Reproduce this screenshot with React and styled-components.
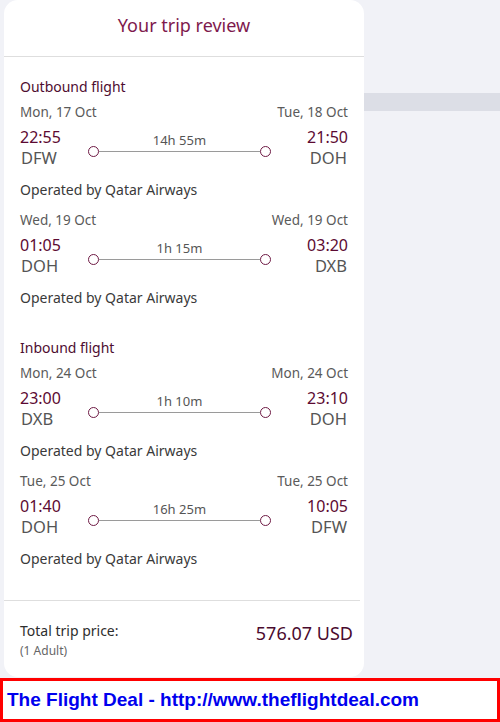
import styled, { createGlobalStyle } from 'styled-components';

const GlobalStyle = createGlobalStyle`
  html, body {
    margin: 0;
    padding: 0;
    background: #f1f2f7;
  }
  * { box-sizing: border-box; }
`;

const Page = styled.div`
  width: 500px;
  font-family: 'Noto Sans', 'Open Sans', sans-serif;
`;

const Top = styled.div`
  display: flex;
  align-items: flex-start;
`;

const Card = styled.div`
  width: 360px;
  margin-left: 4px;
  background: #fff;
  border-radius: 14px;
  flex-shrink: 0;
  position: relative;
  z-index: 1;
`;

const Side = styled.div`
  flex: 1;
  padding-top: 93px;
  margin-left: -1px;
`;

const Band = styled.div`
  height: 18px;
  background: #dcdee6;
`;

const Header = styled.div`
  height: 57px;
  display: flex;
  align-items: center;
  justify-content: center;
  padding-bottom: 7px;
  border-bottom: 1px solid #dedede;
  font-size: 18px;
  color: #7e1a4d;
`;

const Body = styled.div`
  padding: 20px 16px 31px 16px;
`;

const SectionTitle = styled.div`
  font-size: 14px;
  line-height: 20px;
  color: #4e0d30;
  margin-top: ${p => p.$gap || 0}px;
`;

const Segment = styled.div`
  margin-top: ${p => p.$first ? 6 : 11}px;
`;

const DateRow = styled.div`
  display: flex;
  justify-content: space-between;
  font-size: 13.5px;
  line-height: 18px;
  color: #5a5a5a;
`;

const Legs = styled.div`
  display: flex;
  align-items: flex-start;
  margin-top: 6px;
`;

const Point = styled.div`
  display: flex;
  flex-direction: column;
  align-items: ${p => p.$end ? 'flex-end' : 'flex-start'};
  margin-left: ${p => p.$end ? 'auto' : '0'};
`;

const Time = styled.div`
  font-size: 16px;
  line-height: 21px;
  color: #5c0a32;
`;

const Code = styled.div`
  font-size: 16.5px;
  line-height: 20px;
  color: #555;
  padding: 0 1px;
`;

const Middle = styled.div`
  width: 183px;
  margin-left: 27px;
  margin-top: 5px;
  display: flex;
  flex-direction: column;
  align-items: center;
`;

const Duration = styled.div`
  font-size: 13px;
  line-height: 16px;
  color: #555;
`;

const Track = styled.div`
  width: 100%;
  height: 10px;
  margin-top: -2px;
  display: flex;
  align-items: center;
`;

const Dot = styled.span`
  width: 11px;
  height: 11px;
  border: 1.5px solid #6e1a44;
  border-radius: 50%;
  flex-shrink: 0;
`;

const Line = styled.span`
  flex: 1;
  height: 1px;
  background: #9a9a9a;
`;

const Operator = styled.div`
  margin-top: 12px;
  font-size: 14px;
  line-height: 20px;
  color: #3a3a3a;
`;

const Total = styled.div`
  border-top: 1px solid #dedede;
  margin-right: 4px;
  padding: 20px 7px 18px 16px;
  display: flex;
  justify-content: space-between;
  align-items: flex-start;
`;

const TotalLabel = styled.div`
  font-size: 14px;
  line-height: 20px;
  color: #2e2e2e;
`;

const Pax = styled.div`
  margin-top: 2px;
  font-size: 12px;
  line-height: 16px;
  color: #666;
`;

const Price = styled.div`
  font-size: 18px;
  line-height: 24px;
  color: #4a0a2e;
`;

const Footer = styled.div`
  margin-top: 1px;
  height: 44px;
  border: 3px solid #ff0000;
  background: #fff;
  display: flex;
  align-items: center;
  padding-left: 4px;
  font-family: 'Liberation Sans', Arial, sans-serif;
  font-weight: bold;
  font-size: 19px;
  color: #0000ee;
`;

const outbound = [
  { d1: 'Mon, 17 Oct', d2: 'Tue, 18 Oct', t1: '22:55', t2: '21:50', c1: 'DFW', c2: 'DOH', dur: '14h 55m' },
  { d1: 'Wed, 19 Oct', d2: 'Wed, 19 Oct', t1: '01:05', t2: '03:20', c1: 'DOH', c2: 'DXB', dur: '1h 15m' },
];

const inbound = [
  { d1: 'Mon, 24 Oct', d2: 'Mon, 24 Oct', t1: '23:00', t2: '23:10', c1: 'DXB', c2: 'DOH', dur: '1h 10m' },
  { d1: 'Tue, 25 Oct', d2: 'Tue, 25 Oct', t1: '01:40', t2: '10:05', c1: 'DOH', c2: 'DFW', dur: '16h 25m' },
];

function FlightSegment({ seg, first }) {
  return (
    <Segment $first={first}>
      <DateRow>
        <span>{seg.d1}</span>
        <span>{seg.d2}</span>
      </DateRow>
      <Legs>
        <Point>
          <Time>{seg.t1}</Time>
          <Code>{seg.c1}</Code>
        </Point>
        <Middle>
          <Duration>{seg.dur}</Duration>
          <Track>
            <Dot />
            <Line />
            <Dot />
          </Track>
        </Middle>
        <Point $end>
          <Time>{seg.t2}</Time>
          <Code>{seg.c2}</Code>
        </Point>
      </Legs>
      <Operator>Operated by Qatar Airways</Operator>
    </Segment>
  );
}

export default function App() {
  return (
    <Page>
      <GlobalStyle />
      <Top>
        <Card>
          <Header>Your trip review</Header>
          <Body>
            <SectionTitle>Outbound flight</SectionTitle>
            {outbound.map((s, i) => <FlightSegment key={i} seg={s} first={i === 0} />)}
            <SectionTitle $gap={30}>Inbound flight</SectionTitle>
            {inbound.map((s, i) => <FlightSegment key={i} seg={s} first={i === 0} />)}
          </Body>
          <Total>
            <div>
              <TotalLabel>Total trip price:</TotalLabel>
              <Pax>(1 Adult)</Pax>
            </div>
            <Price>576.07 USD</Price>
          </Total>
        </Card>
        <Side>
          <Band />
        </Side>
      </Top>
      <Footer>The Flight Deal - http://www.theflightdeal.com</Footer>
    </Page>
  );
}
